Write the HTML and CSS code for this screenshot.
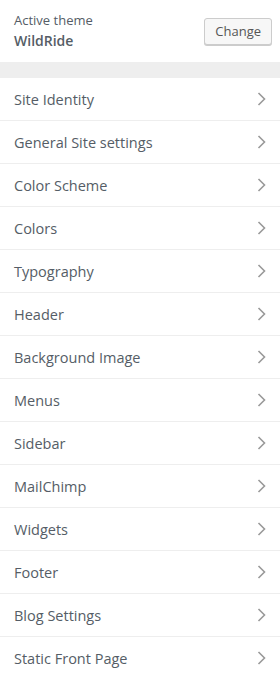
FILE: index.html
```html
<!DOCTYPE html>
<html lang="en">
<head>
  <meta charset="UTF-8" />
  <title>Customize</title>
  <link rel="stylesheet" href="styles.css">
</head>
<body>
  <div class="theme">
    <div class="theme-info">
      <span class="theme-label">Active theme</span>
      <span class="theme-name">WildRide</span>
    </div>
    <button class="change-btn">Change</button>
  </div>

  <div class="spacer"></div>

  <ul class="sections">
    <li>Site Identity <svg class="chev" viewBox="0 0 9 14"><polyline points="1.5,1 7.5,7 1.5,13" /></svg></li>
    <li>General Site settings <svg class="chev" viewBox="0 0 9 14"><polyline points="1.5,1 7.5,7 1.5,13" /></svg></li>
    <li>Color Scheme <svg class="chev" viewBox="0 0 9 14"><polyline points="1.5,1 7.5,7 1.5,13" /></svg></li>
    <li>Colors <svg class="chev" viewBox="0 0 9 14"><polyline points="1.5,1 7.5,7 1.5,13" /></svg></li>
    <li>Typography <svg class="chev" viewBox="0 0 9 14"><polyline points="1.5,1 7.5,7 1.5,13" /></svg></li>
    <li>Header <svg class="chev" viewBox="0 0 9 14"><polyline points="1.5,1 7.5,7 1.5,13" /></svg></li>
    <li>Background Image <svg class="chev" viewBox="0 0 9 14"><polyline points="1.5,1 7.5,7 1.5,13" /></svg></li>
    <li>Menus <svg class="chev" viewBox="0 0 9 14"><polyline points="1.5,1 7.5,7 1.5,13" /></svg></li>
    <li>Sidebar <svg class="chev" viewBox="0 0 9 14"><polyline points="1.5,1 7.5,7 1.5,13" /></svg></li>
    <li>MailChimp <svg class="chev" viewBox="0 0 9 14"><polyline points="1.5,1 7.5,7 1.5,13" /></svg></li>
    <li>Widgets <svg class="chev" viewBox="0 0 9 14"><polyline points="1.5,1 7.5,7 1.5,13" /></svg></li>
    <li>Footer <svg class="chev" viewBox="0 0 9 14"><polyline points="1.5,1 7.5,7 1.5,13" /></svg></li>
    <li>Blog Settings <svg class="chev" viewBox="0 0 9 14"><polyline points="1.5,1 7.5,7 1.5,13" /></svg></li>
    <li>Static Front Page <svg class="chev" viewBox="0 0 9 14"><polyline points="1.5,1 7.5,7 1.5,13" /></svg></li>
  </ul>
</body>
</html>
```

FILE: styles.css
```css
body {
  margin: 0;
  font-family: 'Open Sans', sans-serif;
  color: #555d66;
  background-color: #fff;
}
.theme {
  display: flex;
  justify-content: space-between;
  align-items: center;
  height: 62px;
  padding: 0 8px 0 14px;
}
.theme-info {
  display: flex;
  flex-direction: column;
}
.theme-label {
  font-size: 13px;
  line-height: 19px;
}
.theme-name {
  font-size: 14px;
  font-weight: 600;
  line-height: 22px;
}
.change-btn {
  font-family: 'Open Sans', sans-serif;
  font-size: 13px;
  color: #555;
  background-color: #f7f7f7;
  border: 1px solid #ccc;
  border-radius: 3px;
  box-shadow: 0 1px 0 #ccc;
  height: 27px;
  padding: 0 10px;
  cursor: pointer;
}
.spacer {
  height: 16px;
  background-color: #eee;
}
.sections {
  list-style: none;
  margin: 0;
  padding: 0;
}
.sections li {
  display: flex;
  justify-content: space-between;
  align-items: center;
  height: 42px;
  padding: 0 14px;
  font-size: 14.5px;
  border-bottom: 1px solid #eee;
}
.chev {
  width: 9px;
  height: 14px;
  fill: none;
  stroke: #999;
  stroke-width: 1.6;
}
```
